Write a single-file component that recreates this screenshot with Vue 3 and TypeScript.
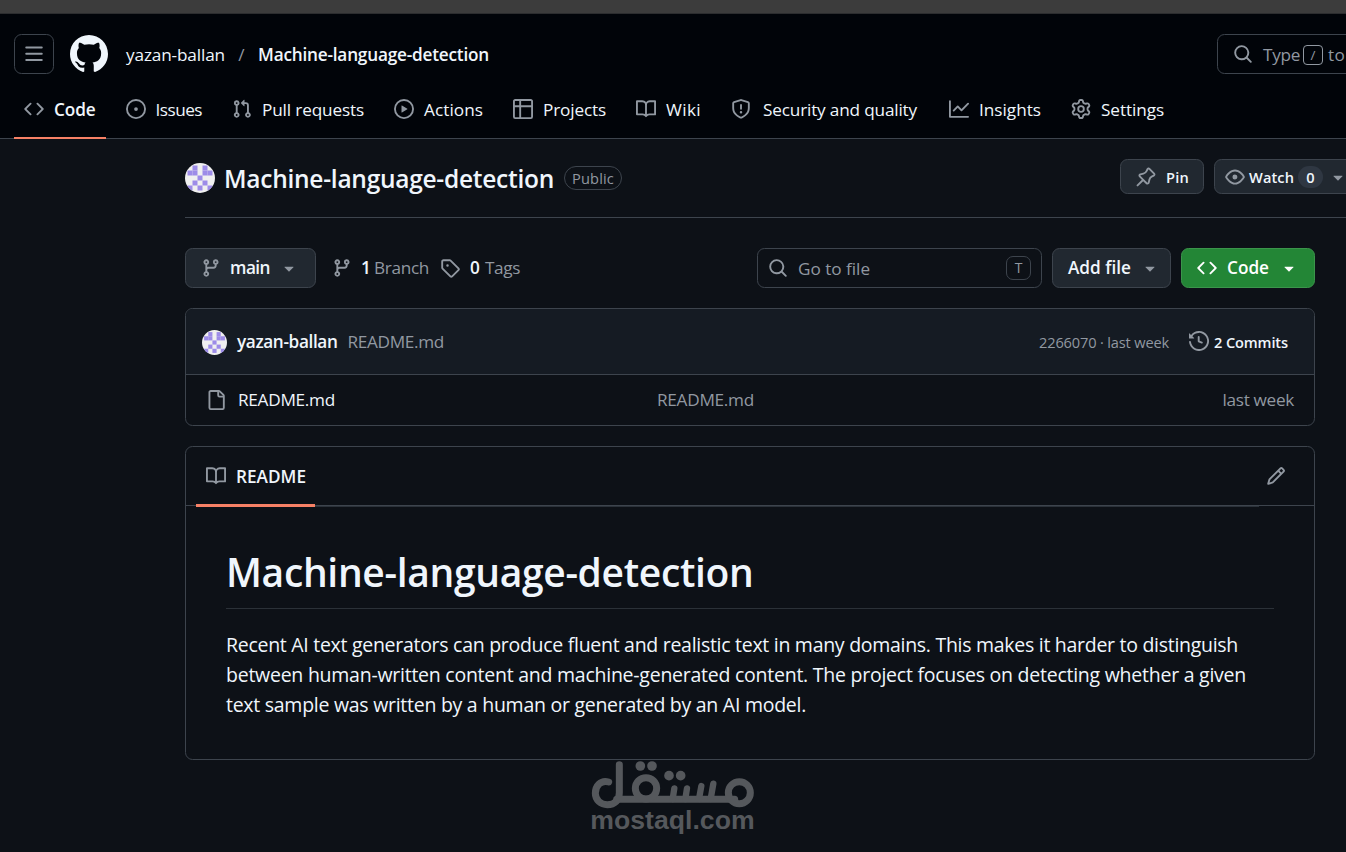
<script setup lang="ts">
import { h, type Directive, type FunctionalComponent } from 'vue'

const paths: Record<string, string> = {
  menu: 'M1 2.75A.75.75 0 0 1 1.75 2h12.5a.75.75 0 0 1 0 1.5H1.75A.75.75 0 0 1 1 2.75Zm0 5A.75.75 0 0 1 1.75 7h12.5a.75.75 0 0 1 0 1.5H1.75A.75.75 0 0 1 1 7.75ZM1.75 12h12.5a.75.75 0 0 1 0 1.5H1.75a.75.75 0 0 1 0-1.5Z',
  mark: 'M8 0c4.42 0 8 3.58 8 8a8.013 8.013 0 0 1-5.45 7.59c-.4.08-.55-.17-.55-.38 0-.27.01-1.13.01-2.2 0-.75-.25-1.23-.54-1.48 1.78-.2 3.65-.88 3.65-3.95 0-.88-.31-1.59-.82-2.15.08-.2.36-1.02-.08-2.12 0 0-.67-.22-2.2.82-.64-.18-1.32-.27-2-.27-.68 0-1.36.09-2 .27-1.53-1.03-2.2-.82-2.2-.82-.44 1.1-.16 1.92-.08 2.12-.51.56-.82 1.28-.82 2.15 0 3.06 1.86 3.75 3.64 3.95-.23.2-.44.55-.51 1.07-.46.21-1.61.55-2.33-.66-.15-.24-.6-.83-1.23-.82-.67.01-.27.38.01.53.34.19.73.9.82 1.13.16.45.68 1.31 2.69.94 0 .67.01 1.3.01 1.49 0 .21-.15.45-.55.38A7.995 7.995 0 0 1 0 8c0-4.42 3.58-8 8-8Z',
  code: 'm11.28 3.22 4.25 4.25a.75.75 0 0 1 0 1.06l-4.25 4.25a.749.749 0 0 1-1.275-.326.749.749 0 0 1 .215-.734L13.94 8l-3.72-3.72a.749.749 0 0 1 .326-1.275.749.749 0 0 1 .734.215Zm-6.56 0a.751.751 0 0 1 1.042.018.751.751 0 0 1 .018 1.042L2.06 8l3.72 3.72a.749.749 0 0 1-.326 1.275.749.749 0 0 1-.734-.215L.47 8.53a.75.75 0 0 1 0-1.06Z',
  issue: 'M8 9.5a1.5 1.5 0 1 0 0-3 1.5 1.5 0 0 0 0 3ZM8 0a8 8 0 1 1 0 16A8 8 0 0 1 8 0ZM1.5 8a6.5 6.5 0 1 0 13 0 6.5 6.5 0 0 0-13 0Z',
  pull: 'M1.5 3.25a2.25 2.25 0 1 1 3 2.122v5.256a2.251 2.251 0 1 1-1.5 0V5.372A2.25 2.25 0 0 1 1.5 3.25Zm5.677-.177L9.573.677A.25.25 0 0 1 10 .854V2.5h1A2.5 2.5 0 0 1 13.5 5v5.628a2.251 2.251 0 1 1-1.5 0V5a1 1 0 0 0-1-1h-1v1.646a.25.25 0 0 1-.427.177L7.177 3.427a.25.25 0 0 1 0-.354ZM3.75 2.5a.75.75 0 1 0 0 1.5.75.75 0 0 0 0-1.5Zm0 9.5a.75.75 0 1 0 0 1.5.75.75 0 0 0 0-1.5Zm8.25.75a.75.75 0 1 0 1.5 0 .75.75 0 0 0-1.5 0Z',
  play: 'M8 0a8 8 0 1 1 0 16A8 8 0 0 1 8 0ZM1.5 8a6.5 6.5 0 1 0 13 0 6.5 6.5 0 0 0-13 0Zm4.879-2.773 4.264 2.559a.25.25 0 0 1 0 .428l-4.264 2.559A.25.25 0 0 1 6 10.559V5.442a.25.25 0 0 1 .379-.215Z',
  table: 'M0 1.75C0 .784.784 0 1.75 0h12.5C15.216 0 16 .784 16 1.75v12.5A1.75 1.75 0 0 1 14.25 16H1.75A1.75 1.75 0 0 1 0 14.25ZM6.5 6.5v8h7.75a.25.25 0 0 0 .25-.25V6.5Zm8-1.5V1.75a.25.25 0 0 0-.25-.25H6.5V5Zm-13 1.5v7.75c0 .138.112.25.25.25H5v-8ZM5 5V1.5H1.75a.25.25 0 0 0-.25.25V5Z',
  book: 'M0 1.75A.75.75 0 0 1 .75 1h4.253c1.227 0 2.317.59 3 1.501A3.743 3.743 0 0 1 11.006 1h4.245a.75.75 0 0 1 .75.75v10.5a.75.75 0 0 1-.75.75h-4.507a2.25 2.25 0 0 0-1.591.659l-.622.621a.75.75 0 0 1-1.06 0l-.622-.621A2.25 2.25 0 0 0 5.258 13H.75a.75.75 0 0 1-.75-.75Zm7.251 10.324.004-5.073-.002-2.253A2.25 2.25 0 0 0 5.003 2.5H1.5v9h3.757a3.75 3.75 0 0 1 1.994.574ZM8.755 4.75l-.004 7.322a3.752 3.752 0 0 1 1.992-.572H14.5v-9h-3.495a2.25 2.25 0 0 0-2.25 2.25Z',
  shield: 'M7.467.133a1.748 1.748 0 0 1 1.066 0l5.25 1.68A1.75 1.75 0 0 1 15 3.48V7c0 1.566-.32 3.182-1.303 4.682-.983 1.498-2.585 2.813-5.032 3.855a1.697 1.697 0 0 1-1.33 0c-2.447-1.042-4.049-2.357-5.032-3.855C1.32 10.182 1 8.566 1 7V3.48a1.75 1.75 0 0 1 1.217-1.667Zm.61 1.429a.25.25 0 0 0-.153 0l-5.25 1.68a.25.25 0 0 0-.174.238V7c0 1.358.275 2.666 1.057 3.86.784 1.194 2.121 2.34 4.366 3.297a.196.196 0 0 0 .154 0c2.245-.956 3.582-2.104 4.366-3.298C13.225 9.666 13.5 8.36 13.5 7V3.48a.251.251 0 0 0-.174-.237l-5.25-1.68ZM8.75 4.75v3a.75.75 0 0 1-1.5 0v-3a.75.75 0 0 1 1.5 0ZM9 10.5a1 1 0 1 1-2 0 1 1 0 0 1 2 0Z',
  graph: 'M1.5 1.75V13.5h13.75a.75.75 0 0 1 0 1.5H.75a.75.75 0 0 1-.75-.75V1.75a.75.75 0 0 1 1.5 0Zm14.28 2.53-5.25 5.25a.75.75 0 0 1-1.06 0L7 7.06 4.28 9.78a.751.751 0 0 1-1.042-.018.751.751 0 0 1-.018-1.042l3.25-3.25a.75.75 0 0 1 1.06 0L10 7.94l4.72-4.72a.751.751 0 0 1 1.042.018.751.751 0 0 1 .018 1.042Z',
  gear: 'M8 0a8.2 8.2 0 0 1 .701.031C9.444.095 9.99.645 10.16 1.29l.288 1.107c.018.066.079.158.212.224.231.114.454.243.668.386.123.082.233.09.299.071l1.103-.303c.644-.176 1.392.021 1.82.63.27.385.506.792.704 1.218.315.675.111 1.422-.364 1.891l-.814.806c-.049.048-.098.147-.088.294.016.257.016.515 0 .772-.01.147.038.246.088.294l.814.806c.475.469.679 1.216.364 1.891a7.977 7.977 0 0 1-.704 1.217c-.428.61-1.176.807-1.82.63l-1.102-.302c-.067-.019-.177-.011-.3.071a5.909 5.909 0 0 1-.668.386c-.133.066-.194.158-.211.224l-.29 1.106c-.168.646-.715 1.196-1.458 1.26a8.006 8.006 0 0 1-1.402 0c-.743-.064-1.289-.614-1.458-1.26l-.289-1.106c-.018-.066-.079-.158-.212-.224a5.738 5.738 0 0 1-.668-.386c-.123-.082-.233-.09-.299-.071l-1.103.303c-.644.176-1.392-.021-1.82-.63a8.12 8.12 0 0 1-.704-1.218c-.315-.675-.111-1.422.363-1.891l.815-.806c.05-.048.098-.147.088-.294a6.214 6.214 0 0 1 0-.772c.01-.147-.038-.246-.088-.294l-.815-.806C.635 6.045.431 5.298.746 4.623a7.92 7.92 0 0 1 .704-1.217c.428-.61 1.176-.807 1.82-.63l1.102.302c.067.019.177.011.3-.071.214-.143.437-.272.668-.386.133-.066.194-.158.211-.224l.29-1.106C6.009.645 6.556.095 7.299.03 7.53.01 7.764 0 8 0Zm-.571 1.525c-.036.003-.108.036-.137.146l-.289 1.105c-.147.561-.549.967-.998 1.189-.173.086-.34.183-.5.29-.417.278-.97.423-1.529.27l-1.103-.303c-.109-.03-.175.016-.195.045-.22.312-.412.644-.573.99-.014.031-.021.11.059.19l.815.806c.411.406.562.957.53 1.456a4.709 4.709 0 0 0 0 .582c.032.499-.119 1.05-.53 1.456l-.815.806c-.081.08-.073.159-.059.19.162.346.353.677.573.989.02.03.085.076.195.046l1.102-.303c.56-.153 1.113-.008 1.53.27.161.107.328.204.501.29.447.222.85.629.997 1.189l.289 1.105c.029.109.101.143.137.146a6.6 6.6 0 0 0 1.142 0c.036-.003.108-.036.137-.146l.289-1.105c.147-.561.549-.967.998-1.189.173-.086.34-.183.5-.29.417-.278.97-.423 1.529-.27l1.103.303c.109.029.175-.016.195-.045.22-.313.411-.644.573-.99.014-.031.021-.11-.059-.19l-.815-.806c-.411-.406-.562-.957-.53-1.456a4.709 4.709 0 0 0 0-.582c-.032-.499.119-1.05.53-1.456l.815-.806c.081-.08.073-.159.059-.19a6.464 6.464 0 0 0-.573-.989c-.02-.03-.085-.076-.195-.046l-1.102.303c-.56.153-1.113.008-1.53-.27a4.44 4.44 0 0 0-.501-.29c-.447-.222-.85-.629-.997-1.189l-.289-1.105c-.029-.11-.101-.143-.137-.146a6.6 6.6 0 0 0-1.142 0ZM11 8a3 3 0 1 1-6 0 3 3 0 0 1 6 0ZM9.5 8a1.5 1.5 0 1 0-3.001.001A1.5 1.5 0 0 0 9.5 8Z',
  search: 'M10.68 11.74a6 6 0 0 1-7.922-8.982 6 6 0 0 1 8.982 7.922l3.04 3.04a.749.749 0 0 1-.326 1.275.749.749 0 0 1-.734-.215ZM11.5 7a4.499 4.499 0 1 0-8.997 0A4.499 4.499 0 0 0 11.5 7Z',
  pin: 'm11.294.984 3.722 3.722a1.75 1.75 0 0 1-.504 2.826l-1.327.613a3.089 3.089 0 0 0-1.707 2.084l-.584 2.454c-.317 1.332-1.972 1.8-2.94.832L5.75 11.311 1.78 15.28a.749.749 0 1 1-1.06-1.06l3.969-3.97-2.204-2.204c-.968-.968-.5-2.623.832-2.94l2.454-.584a3.08 3.08 0 0 0 2.084-1.707l.613-1.327a1.75 1.75 0 0 1 2.826-.504ZM6.283 9.723l2.732 2.731a.25.25 0 0 0 .42-.119l.584-2.454a4.586 4.586 0 0 1 2.537-3.098l1.328-.613a.25.25 0 0 0 .072-.404l-3.722-3.722a.25.25 0 0 0-.404.072l-.613 1.328a4.584 4.584 0 0 1-3.098 2.537l-2.454.584a.25.25 0 0 0-.119.42l2.731 2.732Z',
  eye: 'M8 2c1.981 0 3.671.992 4.933 2.078 1.27 1.091 2.187 2.345 2.637 3.023a1.62 1.62 0 0 1 0 1.798c-.45.678-1.367 1.932-2.637 3.023C11.67 13.008 9.981 14 8 14c-1.981 0-3.671-.992-4.933-2.078C1.797 10.83.88 9.576.43 8.898a1.62 1.62 0 0 1 0-1.798c.45-.677 1.367-1.931 2.637-3.022C4.33 2.992 6.019 2 8 2ZM1.679 7.932a.12.12 0 0 0 0 .136c.411.622 1.241 1.75 2.366 2.717C5.176 11.758 6.527 12.5 8 12.5c1.473 0 2.825-.742 3.955-1.715 1.124-.967 1.954-2.096 2.366-2.717a.12.12 0 0 0 0-.136c-.412-.621-1.242-1.75-2.366-2.717C10.824 4.242 9.473 3.5 8 3.5c-1.473 0-2.825.742-3.955 1.715-1.124.967-1.954 2.096-2.366 2.717ZM8 10a2 2 0 1 1-.001-3.999A2 2 0 0 1 8 10Z',
  branch: 'M9.5 3.25a2.25 2.25 0 1 1 3 2.122V6A2.5 2.5 0 0 1 10 8.5H6a1 1 0 0 0-1 1v1.128a2.251 2.251 0 1 1-1.5 0V5.372a2.25 2.25 0 1 1 1.5 0v1.836A2.493 2.493 0 0 1 6 7h4a1 1 0 0 0 1-1v-.628A2.25 2.25 0 0 1 9.5 3.25Zm-6 0a.75.75 0 1 0 1.5 0 .75.75 0 0 0-1.5 0Zm8.25-.75a.75.75 0 1 0 0 1.5.75.75 0 0 0 0-1.5ZM4.25 12a.75.75 0 1 0 0 1.5.75.75 0 0 0 0-1.5Z',
  tag: 'M1 7.775V2.75C1 1.784 1.784 1 2.75 1h5.025c.464 0 .91.184 1.238.513l6.25 6.25a1.75 1.75 0 0 1 0 2.474l-5.026 5.026a1.75 1.75 0 0 1-2.474 0l-6.25-6.25A1.752 1.752 0 0 1 1 7.775Zm1.5 0c0 .066.026.13.073.177l6.25 6.25a.25.25 0 0 0 .354 0l5.025-5.025a.25.25 0 0 0 0-.354l-6.25-6.25a.25.25 0 0 0-.177-.073H2.75a.25.25 0 0 0-.25.25ZM6 5a1 1 0 1 1 0 2 1 1 0 0 1 0-2Z',
  down: 'm4.427 7.427 3.396 3.396a.25.25 0 0 0 .354 0l3.396-3.396A.25.25 0 0 0 11.396 7H4.604a.25.25 0 0 0-.177.427Z',
  history: 'm.427 1.927 1.215 1.215a8.002 8.002 0 1 1-1.6 5.685.75.75 0 1 1 1.493-.154 6.5 6.5 0 1 0 1.18-4.458l1.358 1.358A.25.25 0 0 1 3.896 6H.25A.25.25 0 0 1 0 5.75V2.104a.25.25 0 0 1 .427-.177ZM7.75 4a.75.75 0 0 1 .75.75v2.992l2.028.812a.75.75 0 0 1-.557 1.392l-2.5-1A.751.751 0 0 1 7 8.25v-3.5A.75.75 0 0 1 7.75 4Z',
  file: 'M2 1.75C2 .784 2.784 0 3.75 0h6.586c.464 0 .909.184 1.237.513l2.914 2.914c.329.328.513.773.513 1.237v9.586A1.75 1.75 0 0 1 13.25 16h-9.5A1.75 1.75 0 0 1 2 14.25Zm1.75-.25a.25.25 0 0 0-.25.25v12.5c0 .138.112.25.25.25h9.5a.25.25 0 0 0 .25-.25V6h-2.75A1.75 1.75 0 0 1 9 4.25V1.5Zm6.75.062V4.25c0 .138.112.25.25.25h2.688l-.011-.013-2.914-2.914-.013-.011Z',
  pencil: 'M11.013 1.427a1.75 1.75 0 0 1 2.474 0l1.086 1.086a1.75 1.75 0 0 1 0 2.474l-8.61 8.61c-.21.21-.47.364-.756.445l-3.251.93a.75.75 0 0 1-.927-.928l.929-3.25c.081-.286.235-.547.445-.758l8.61-8.61Zm.176 4.823L9.75 4.81l-6.286 6.287a.253.253 0 0 0-.064.108l-.558 1.953 1.953-.558a.253.253 0 0 0 .108-.064Zm1.238-3.763a.25.25 0 0 0-.354 0L10.811 3.75l1.439 1.44 1.263-1.263a.25.25 0 0 0 0-.354Z',
}

const Icon: FunctionalComponent<{ name: string }> = (props) =>
  h('svg', { viewBox: '0 0 16 16', fill: 'currentColor', 'aria-hidden': 'true' }, [h('path', { d: paths[props.name] })])
Icon.props = ['name']

// Filled cells of the 5x5 identicon, as [column, row]
const cells = [[1, 0], [3, 0], [0, 1], [1, 1], [3, 1], [4, 1], [2, 2], [1, 3], [3, 3], [0, 4], [2, 4], [4, 4]]
const Identicon: FunctionalComponent = () =>
  h('svg', { viewBox: '0 0 12 12' }, [
    h('rect', { width: 12, height: 12, fill: '#f0f0f0' }),
    ...cells.map(([x, y]) => h('rect', { x: 1 + x * 2, y: 1 + y * 2, width: 2, height: 2, fill: '#9d8ce8' })),
  ])

// Tracks a label so that it takes the given width in pixels
const vFit: Directive<HTMLElement, number> = {
  mounted(el, { value }) {
    const natural = el.getBoundingClientRect().width
    const count = (el.textContent ?? '').trim().length
    el.style.letterSpacing = `${(value - natural) / count}px`
  },
}

const tabs = [
  { icon: 'code', label: 'Code', width: 41.5, active: true },
  { icon: 'issue', label: 'Issues', width: 46.5 },
  { icon: 'pull', label: 'Pull requests', width: 102 },
  { icon: 'play', label: 'Actions', width: 59 },
  { icon: 'table', label: 'Projects', width: 63 },
  { icon: 'book', label: 'Wiki', width: 35 },
  { icon: 'shield', label: 'Security and quality', width: 154, wide: true },
  { icon: 'graph', label: 'Insights', width: 62 },
  { icon: 'gear', label: 'Settings', width: 63 },
]

const description = [
  { text: 'Recent AI text generators can produce fluent and realistic text in many domains. This makes it harder to distinguish', width: 1012 },
  { text: 'between human-written content and machine-generated content. The project focuses on detecting whether a given', width: 1020 },
  { text: 'text sample was written by a human or generated by an AI model.', width: 580 },
]
</script>

<template>
  <div class="page">
    <div class="strip"></div>
    <header class="top">
      <div class="bar">
        <button class="menu"><Icon name="menu" class="icon" /></button>
        <Icon name="mark" class="logo" />
        <nav class="crumbs">
          <span v-fit="99">yazan-ballan</span>
          <span class="slash">/</span>
          <b v-fit="231">Machine-language-detection</b>
        </nav>
        <div class="search">
          <Icon name="search" class="icon" />
          <span v-fit="37" class="type">Type</span>
          <kbd>/</kbd>
          <span v-fit="17">to</span>
        </div>
      </div>
      <nav class="tabs">
        <a v-for="t in tabs" :key="t.label" class="tab" :class="{ active: t.active, wide: t.wide }">
          <Icon :name="t.icon" class="icon" />
          <span v-fit="t.width">{{ t.label }}</span>
        </a>
      </nav>
    </header>

    <main class="main">
      <section class="repo">
        <Identicon class="avatar" />
        <h2 v-fit="330">Machine-language-detection</h2>
        <span class="pill"><span v-fit="42">Public</span></span>
        <div class="actions">
          <button class="btn small pin"><Icon name="pin" class="icon" /><span v-fit="23">Pin</span></button>
          <button class="btn small watch">
            <Icon name="eye" class="icon" /><span v-fit="45">Watch</span>
            <span class="counter">0</span>
            <Icon name="down" class="icon caret" />
          </button>
        </div>
      </section>

      <div class="content">
        <section class="tools">
          <button class="btn branch">
            <Icon name="branch" class="icon" /><span v-fit="40">main</span><Icon name="down" class="icon caret" />
          </button>
          <a class="stat"><Icon name="branch" class="icon" /><b>1</b><span v-fit="55">Branch</span></a>
          <a class="stat tags"><Icon name="tag" class="icon" /><b>0</b><span v-fit="35">Tags</span></a>
          <div class="find">
            <Icon name="search" class="icon" /><span v-fit="72">Go to file</span><kbd>T</kbd>
          </div>
          <button class="btn add"><span v-fit="63">Add file</span><Icon name="down" class="icon caret" /></button>
          <button class="btn clone">
            <Icon name="code" class="icon" /><span v-fit="42">Code</span><Icon name="down" class="icon caret" />
          </button>
        </section>

        <section class="box files">
          <div class="commit">
            <Identicon class="avatar" />
            <b v-fit="100.5">yazan-ballan</b>
            <span v-fit="96.5" class="message">README.md</span>
            <span v-fit="130" class="meta">2266070 · last week</span>
            <Icon name="history" class="icon" />
            <b v-fit="74" class="count">2 Commits</b>
          </div>
          <div class="row">
            <span class="name"><Icon name="file" class="icon" /><span v-fit="97">README.md</span></span>
            <span class="message"><span v-fit="97">README.md</span></span>
            <span v-fit="71.5" class="age">last week</span>
          </div>
        </section>

        <section class="box readme">
          <div class="heading">
            <div class="readme-tab"><Icon name="book" class="icon" /><b v-fit="70">README</b></div>
            <Icon name="pencil" class="icon pencil" />
          </div>
          <article class="article">
            <h1><span v-fit="527.5">Machine-language-detection</span></h1>
            <p>
              <span v-for="line in description" :key="line.width" class="line"><span v-fit="line.width">{{ line.text }}</span></span>
            </p>
          </article>
        </section>
      </div>
    </main>

    <svg class="brand" viewBox="0 0 510 270" width="170" height="90">
      <g fill="none" stroke="#55585c" stroke-width="21" stroke-linecap="round">
        <path d="M62 78C38 71 22 90 22 112C22 132 38 146 58 146C80 146 94 132 94 110V26" />
        <path d="M86 130H440" />
        <circle cx="174" cy="97" r="32" />
        <circle cx="454" cy="110" r="33" />
        <path d="M259 97L254 129M297 97L292 129M340 90L333 129M376 83L368 129" stroke-width="19" />
      </g>
      <g fill="#55585c">
        <circle cx="157" cy="30" r="14.5" /><circle cx="192" cy="30" r="14.5" />
        <circle cx="243" cy="59" r="14.5" /><circle cx="278" cy="59" r="14.5" />
        <text x="7" y="220" textLength="493" lengthAdjust="spacingAndGlyphs">mostaql.com</text>
      </g>
    </svg>
  </div>
</template>

<style>
html, body { margin: 0; background: #0d1117; overflow: hidden; }
</style>

<style scoped>
* { box-sizing: border-box; }
.page { position: relative; width: 1346px; height: 852px; overflow: hidden; background: #0d1117; color: #f0f6fc; font: 17.2px/24px "Open Sans", "Noto Sans", sans-serif; white-space: nowrap; }
b, h2, h1 { font-weight: 600; }
span, b { flex: none; }
button { font: inherit; color: inherit; margin: 0; padding: 0; }
.icon { width: 20px; height: 20px; flex: none; color: #9198a1; display: block; }
.strip { height: 14px; background: #3c3c3c; border-bottom: 1px solid #2c2d2f; }
.top { height: 125px; padding-top: 20px; background: #010409; border-bottom: 1px solid #3d444d; }
.bar { display: flex; align-items: center; height: 40px; padding-left: 14px; }
.menu { flex: none; width: 40px; height: 40px; display: grid; place-items: center; background: none; border: 1px solid #3d444d; border-radius: 7.5px; }
.logo { width: 38px; height: 38px; margin-left: 16px; color: #f0f6fc; flex: none; }
.crumbs { display: flex; flex: none; margin-left: 18px; padding-top: 1px; }
.slash { width: 33px; text-align: center; color: #9198a1; }
.search { display: flex; align-items: center; flex: none; width: 350px; height: 40px; margin-left: 728px; padding-left: 15px; border: 1px solid #3d444d; border-radius: 7.5px; color: #9198a1; }
.search > span { padding-top: 1px; }
.type { margin-left: 10px; }
.search kbd { flex: none; width: 20px; height: 20px; margin: 1px 5px 0 3px; border: 1px solid #9198a1; border-radius: 4px; font: 13.5px/18px "Open Sans", sans-serif; text-align: center; }
.tabs { display: flex; gap: 10px; height: 58px; margin-top: 6px; padding-left: 14px; }
.tab { position: relative; display: flex; align-items: center; gap: 10px; padding: 0 10px; }
.tab span { padding-top: 2px; }
.tab.wide { gap: 12px; padding-right: 12px; }
.tab.active { font-weight: 600; }
.tab.active::after { content: ""; position: absolute; left: 0; right: 0; bottom: -1px; height: 2px; background: #f78166; }
.main { padding-left: 185px; }
.repo { display: flex; align-items: center; height: 79px; border-bottom: 1px solid #3d444d; }
.avatar { flex: none; width: 30px; height: 30px; border-radius: 50%; }
.repo h2 { margin: 2px 0 0 9px; font-size: 24.5px; line-height: 30px; flex: none; }
.pill { display: flex; align-items: center; justify-content: center; width: 58px; height: 24px; margin-left: 10px; border: 1px solid #3d444d; border-radius: 12px; color: #9198a1; font-size: 14.6px; font-weight: 500; }
.actions { display: flex; gap: 10px; margin: -3px 0 0 498px; flex: none; }
.btn { display: flex; align-items: center; flex: none; height: 40px; border: 1px solid #3d444d; border-radius: 7.5px; background: #212830; font-weight: 600; }
.small { height: 35px; font-size: 14.6px; }
.pin { width: 84px; padding-left: 15px; gap: 10px; }
.watch { width: 160px; padding-left: 10px; }
.watch > span:first-of-type { margin-left: 4px; }
.counter { width: 25px; height: 22px; margin: 0 5px 0 4px; border-radius: 11px; background: #2f3742; text-align: center; line-height: 22px; }
.content { width: 1130px; }
.tools { display: flex; align-items: center; height: 40px; margin-top: 30px; }
.branch { width: 131px; padding-left: 15px; gap: 9px; }
.stat { display: flex; align-items: center; margin-left: 16px; color: #9198a1; font-weight: 500; }
.stat b { width: 13px; margin-left: 9px; color: #f0f6fc; }
.stat.tags { margin-left: 11px; }
.stat.tags b { width: 15px; margin-left: 10px; }
.find { display: flex; align-items: center; gap: 10px; width: 285px; height: 40px; margin-left: auto; padding: 0 10px; border: 1px solid #3d444d; border-radius: 7.5px; color: #9198a1; }
.find > span { padding-top: 1px; }
.find kbd { flex: none; width: 25px; height: 24px; margin-left: auto; border: 1px solid #3d444d; border-radius: 7px; font: 14px/22px "Open Sans", sans-serif; text-align: center; }
.add { width: 119px; margin-left: 10px; padding-left: 15px; gap: 9px; }
.clone { width: 134px; margin-left: 10px; padding-left: 15px; gap: 10px; background: #238636; border-color: #3b954b; color: #fff; }
.clone .icon { color: #fff; }
.box { border: 1px solid #3d444d; border-radius: 7.5px; }
.files { height: 118px; margin-top: 20px; overflow: hidden; }
.commit { display: flex; align-items: center; height: 66px; padding: 0 26px 0 16px; background: #151b23; border-bottom: 1px solid #3d444d; }
.commit .avatar { width: 25px; height: 25px; margin: 2px 10px 0 0; }
.message, .meta, .age { color: #9198a1; }
.commit .message { margin-left: 10px; }
.meta { margin-left: auto; font-size: 14.6px; }
.commit .icon { margin: -2px 5px 0 20px; }
.count { font-size: 14.6px; }
.row { display: flex; align-items: center; height: 50px; padding: 0 20px; }
.row .message, .row .age, .name > span { padding-bottom: 1px; }
.name { display: flex; align-items: center; gap: 12px; width: 451px; }
.age { margin-left: auto; }
.readme { height: 314px; margin-top: 20px; }
.heading { display: flex; align-items: center; justify-content: space-between; height: 59px; padding: 0 28px 0 10px; border-bottom: 1px solid #3d444d; position: relative; }
.heading::after { content: ""; position: absolute; left: 10px; right: 55px; bottom: -2px; height: 1px; background: #2b323a; }
.readme-tab { position: relative; display: flex; align-items: center; gap: 10px; height: 58px; padding: 0 10px; width: 119px; }
.readme-tab b { padding-top: 1px; }
.readme-tab::after { content: ""; position: absolute; z-index: 1; left: 0; right: 0; bottom: -2px; height: 3px; background: #f78166; }
.article { padding: 40px; }
.article h1 { height: 63px; margin: 0; border-bottom: 1px solid #2b3138; font-size: 39px; line-height: 52px; }
.article p { margin: 21px 0 0; font-size: 19.5px; line-height: 30px; }
.line { display: block; }
.brand { position: absolute; left: 588px; top: 756px; }
.brand text { font: bold 80px "Liberation Sans", Arial, sans-serif; }
</style>
